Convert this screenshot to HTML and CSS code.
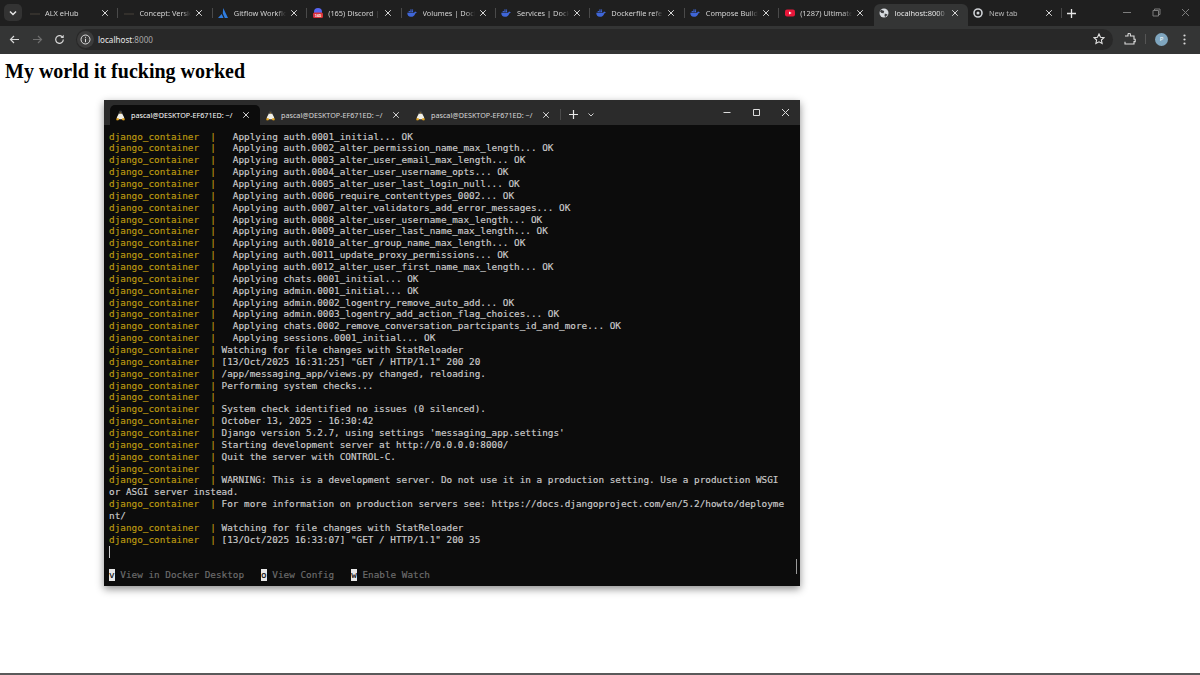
FILE: index.html
```html
<!DOCTYPE html>
<html lang="en">
<head>
<meta charset="utf-8">
<title>localhost:8000</title>
<link rel="stylesheet" href="styles.css">
</head>
<body>
<svg class="defs" width="0" height="0" aria-hidden="true">
  <symbol id="whale" viewBox="0 0 12 10"><path fill="#3f66d8" d="M0.300 4.600h8.400c.3-.9 1-1.200 1.400-1.300.2.500.5.700 1.600.8-.3.900-1 1.300-1.800 1.400C9.200 8.200 7.300 9.600 4.600 9.600 1.800 9.600.4 7.600.3 4.600z"/><path fill="#3f66d8" d="M2 2.600h1.500V4H2zM3.900 2.600h1.500V4H3.900zM5.800 2.600h1.500V4H5.800zM3.900.8h1.500v1.400H3.900zM5.800.8h1.500v1.400H5.800z"/></symbol>
  <symbol id="penguin" viewBox="0 0 12 12"><path fill="#f2f0e6" d="M6 2.500c1.200 0 1.800 1 2.200 2.200.5 1.500 2 3 2 4.700L8 10H4L1.800 9.400c0-1.700 1.500-3.200 2-4.700C4.200 3.500 4.800 2.500 6 2.500z"/><path fill="#3a3a3a" d="M6 .5c1.200 0 1.800 1 1.800 2.200 0 .6.200 1 .4 1.500H3.800c.2-.5.4-.9.4-1.500C4.200 1.500 4.800.5 6 .5z"/><path fill="#e2a21c" d="M1 9.500 3.700 8.700 4.500 11 2 11.500zM11 9.500 8.300 8.700 7.500 11 10 11.500zM5.200 3h1.600L6 4z"/></symbol>
  <symbol id="x" viewBox="0 0 10 10"><path fill="none" stroke="currentColor" stroke-width="1.200" d="M1.500 1.500l7 7M8.500 1.500l-7 7"/></symbol>
</svg>

<header class="chrome">
  <div class="tabstrip">
    <div class="tabsearch"><svg width="8" height="6" viewBox="0 0 8 6"><path fill="none" stroke="#e8e8e8" stroke-width="1.500" d="M1 1.500l3 3 3-3"/></svg></div>
    <div class="tabs">
      <div class="tab sep"><svg class="fav" viewBox="0 0 10 10"><path fill="#33302c" d="M0 5h10v2H0z"/></svg><span class="tab-title">ALX eHub</span><svg class="tab-x"><use href="#x"/></svg></div>
      <div class="tab sep"><svg class="fav" viewBox="0 0 10 10"><path fill="#33302c" d="M0 5h10v2H0z"/></svg><span class="tab-title">Concept: Versio</span><svg class="tab-x"><use href="#x"/></svg></div>
      <div class="tab sep"><svg class="fav" viewBox="0 0 10 10"><path fill="#2f7de1" d="M5.200 0 10 10H6.800L4.800 5.500zM3.700 6 5.500 10H0z"/></svg><span class="tab-title">Gitflow Workflo</span><svg class="tab-x"><use href="#x"/></svg></div>
      <div class="tab sep"><svg class="fav" viewBox="0 0 10 10"><circle cx="5" cy="4" r="4" fill="#5865f2"/><rect x="0" y="4.500" width="10" height="5.500" rx="1.500" fill="#d8303a"/><text class="badge" x="5" y="9">165</text></svg><span class="tab-title">(165) Discord |</span><svg class="tab-x"><use href="#x"/></svg></div>
      <div class="tab sep"><svg class="fav"><use href="#whale"/></svg><span class="tab-title">Volumes | Dock</span><svg class="tab-x"><use href="#x"/></svg></div>
      <div class="tab sep"><svg class="fav"><use href="#whale"/></svg><span class="tab-title">Services | Dock</span><svg class="tab-x"><use href="#x"/></svg></div>
      <div class="tab sep"><svg class="fav"><use href="#whale"/></svg><span class="tab-title">Dockerfile refe</span><svg class="tab-x"><use href="#x"/></svg></div>
      <div class="tab sep"><svg class="fav"><use href="#whale"/></svg><span class="tab-title">Compose Build</span><svg class="tab-x"><use href="#x"/></svg></div>
      <div class="tab"><svg class="fav" viewBox="0 0 10 10"><rect y="1.500" width="10" height="7" rx="2" fill="#e8173a"/><path fill="#fff" d="M4 3.500 6.700 5 4 6.500z"/></svg><span class="tab-title">(1287) Ultimate</span><svg class="tab-x"><use href="#x"/></svg></div>
      <div class="tab active"><svg class="fav" viewBox="0 0 10 10"><circle cx="5" cy="5" r="4.500" fill="#d6dade"/><path fill="#3c3d3f" d="M2 1.800 5.200 3 4.600 5.200 2.500 5 1 3.500zM5.800 5.600 8.600 6.400 6.500 9 5.500 8z"/></svg><span class="tab-title">localhost:8000</span><svg class="tab-x"><use href="#x"/></svg></div>
      <div class="tab sep"><svg class="fav" viewBox="0 0 10 10"><circle cx="5" cy="5" r="4" fill="none" stroke="#cfd2d6" stroke-width="1.600"/><circle cx="5" cy="5" r="1.500" fill="#cfd2d6"/></svg><span class="tab-title dim">New tab</span><svg class="tab-x"><use href="#x"/></svg></div>
    </div>
    <div class="newtab"><svg width="9" height="9" viewBox="0 0 9 9"><path stroke="#e6e6e6" stroke-width="1.300" d="M4.500 0v9M0 4.500h9"/></svg></div>
    <div class="winbtns">
      <svg width="9" height="9" viewBox="0 0 9 9"><path stroke="#7d7d7d" d="M0 4.500h8"/></svg>
      <svg width="9" height="9" viewBox="0 0 9 9"><path fill="none" stroke="#7d7d7d" d="M1 2.500h5.500V8H1zM2.500 2.500V1H8v5.500H6.500"/></svg>
      <svg width="9" height="9" viewBox="0 0 9 9"><path stroke="#7d7d7d" d="M1 1l7 7M8 1 1 8"/></svg>
    </div>
  </div>
  <div class="toolbar">
    <div class="navbtns">
      <svg width="11" height="11" viewBox="0 0 11 11"><path fill="none" stroke="#d8d8d8" stroke-width="1.200" d="M10 5.500H1.500M5 2 1.500 5.500 5 9"/></svg>
      <svg width="11" height="11" viewBox="0 0 11 11"><path fill="none" stroke="#6e6e6e" stroke-width="1.200" d="M1 5.500h8.500M6 2l3.500 3.500L6 9"/></svg>
      <svg width="11" height="11" viewBox="0 0 11 11"><path fill="none" stroke="#d8d8d8" stroke-width="1.200" d="M9.300 5.500A3.800 3.800 0 1 1 8.200 2.800"/><path fill="#d8d8d8" d="M9.700 .8v3.200H6.500z"/></svg>
    </div>
    <div class="omnibox">
      <span class="site-info"><svg width="11" height="11" viewBox="0 0 11 11"><circle cx="5.500" cy="5.500" r="4.500" fill="none" stroke="#dcdcdc" stroke-width="1"/><path stroke="#dcdcdc" d="M5.500 4.800v3.400M5.500 2.800v1"/></svg></span>
      <span class="url">localhost<span class="url-port">:8000</span></span>
      <svg class="star" width="12" height="12" viewBox="0 0 12 12"><path fill="none" stroke="#e4e4e4" stroke-width="1.100" d="M6 1l1.500 3.200 3.500.4-2.600 2.400.7 3.500L6 8.800 2.900 10.500l.7-3.500L1 4.600l3.500-.4z"/></svg>
    </div>
    <div class="tools">
      <svg width="12" height="12" viewBox="0 0 12 12"><path fill="none" stroke="#dcdcdc" stroke-width="1.100" d="M1 3h3V1.500a1.200 1.200 0 0 1 2.400 0V3H10v3.200h1.200V8.600H10V11H1V8.800"/></svg>
      <span class="tool-sep"></span>
      <span class="avatar">P</span>
      <svg class="dots" width="3" height="11" viewBox="0 0 3 11"><circle cx="1.500" cy="1.500" r="1.100" fill="#d8d8d8"/><circle cx="1.500" cy="5.500" r="1.100" fill="#d8d8d8"/><circle cx="1.500" cy="9.500" r="1.100" fill="#d8d8d8"/></svg>
    </div>
  </div>
</header>

<main class="page">
  <h1 class="headline">My world it fucking worked</h1>
  <section class="terminal">
    <div class="term-bar">
      <div class="term-tab active"><svg class="tux"><use href="#penguin"/></svg><span class="term-title">pascal@DESKTOP-EF671ED: ~/</span><svg class="term-x"><use href="#x"/></svg></div>
      <div class="term-tab"><svg class="tux"><use href="#penguin"/></svg><span class="term-title">pascal@DESKTOP-EF671ED: ~/</span><svg class="term-x"><use href="#x"/></svg></div>
      <div class="term-tab"><svg class="tux"><use href="#penguin"/></svg><span class="term-title">pascal@DESKTOP-EF671ED: ~/</span><svg class="term-x"><use href="#x"/></svg></div>
      <span class="term-divider"></span>
      <svg class="term-plus" width="9" height="9" viewBox="0 0 9 9"><path stroke="#e8e8e8" stroke-width="1.200" d="M4.500 0v9M0 4.500h9"/></svg>
      <svg class="term-chev" width="6" height="4" viewBox="0 0 6 4"><path fill="none" stroke="#cfcfcf" d="M.5.500 3 3 5.500.5"/></svg>
      <div class="term-win">
        <svg width="9" height="9" viewBox="0 0 9 9"><path stroke="#dcdcdc" d="M.5 4.500h7"/></svg>
        <svg width="9" height="9" viewBox="0 0 9 9"><path fill="none" stroke="#dcdcdc" d="M1.500 1.500h6v6h-6z"/></svg>
        <svg width="9" height="9" viewBox="0 0 9 9"><path stroke="#dcdcdc" d="M1 1l7 7M8 1 1 8"/></svg>
      </div>
    </div>
    <div class="term-body">
      <div class="log">
        <div class="line"><span class="c">django_container  |</span>   Applying auth.0001_initial... OK</div>
        <div class="line"><span class="c">django_container  |</span>   Applying auth.0002_alter_permission_name_max_length... OK</div>
        <div class="line"><span class="c">django_container  |</span>   Applying auth.0003_alter_user_email_max_length... OK</div>
        <div class="line"><span class="c">django_container  |</span>   Applying auth.0004_alter_user_username_opts... OK</div>
        <div class="line"><span class="c">django_container  |</span>   Applying auth.0005_alter_user_last_login_null... OK</div>
        <div class="line"><span class="c">django_container  |</span>   Applying auth.0006_require_contenttypes_0002... OK</div>
        <div class="line"><span class="c">django_container  |</span>   Applying auth.0007_alter_validators_add_error_messages... OK</div>
        <div class="line"><span class="c">django_container  |</span>   Applying auth.0008_alter_user_username_max_length... OK</div>
        <div class="line"><span class="c">django_container  |</span>   Applying auth.0009_alter_user_last_name_max_length... OK</div>
        <div class="line"><span class="c">django_container  |</span>   Applying auth.0010_alter_group_name_max_length... OK</div>
        <div class="line"><span class="c">django_container  |</span>   Applying auth.0011_update_proxy_permissions... OK</div>
        <div class="line"><span class="c">django_container  |</span>   Applying auth.0012_alter_user_first_name_max_length... OK</div>
        <div class="line"><span class="c">django_container  |</span>   Applying chats.0001_initial... OK</div>
        <div class="line"><span class="c">django_container  |</span>   Applying admin.0001_initial... OK</div>
        <div class="line"><span class="c">django_container  |</span>   Applying admin.0002_logentry_remove_auto_add... OK</div>
        <div class="line"><span class="c">django_container  |</span>   Applying admin.0003_logentry_add_action_flag_choices... OK</div>
        <div class="line"><span class="c">django_container  |</span>   Applying chats.0002_remove_conversation_partcipants_id_and_more... OK</div>
        <div class="line"><span class="c">django_container  |</span>   Applying sessions.0001_initial... OK</div>
        <div class="line"><span class="c">django_container  |</span> Watching for file changes with StatReloader</div>
        <div class="line"><span class="c">django_container  |</span> [13/Oct/2025 16:31:25] "GET / HTTP/1.1" 200 20</div>
        <div class="line"><span class="c">django_container  |</span> /app/messaging_app/views.py changed, reloading.</div>
        <div class="line"><span class="c">django_container  |</span> Performing system checks...</div>
        <div class="line"><span class="c">django_container  |</span></div>
        <div class="line"><span class="c">django_container  |</span> System check identified no issues (0 silenced).</div>
        <div class="line"><span class="c">django_container  |</span> October 13, 2025 - 16:30:42</div>
        <div class="line"><span class="c">django_container  |</span> Django version 5.2.7, using settings 'messaging_app.settings'</div>
        <div class="line"><span class="c">django_container  |</span> Starting development server at http://0.0.0.0:8000/</div>
        <div class="line"><span class="c">django_container  |</span> Quit the server with CONTROL-C.</div>
        <div class="line"><span class="c">django_container  |</span></div>
        <div class="line"><span class="c">django_container  |</span> WARNING: This is a development server. Do not use it in a production setting. Use a production WSGI</div>
        <div class="line">or ASGI server instead.</div>
        <div class="line"><span class="c">django_container  |</span> For more information on production servers see: https://docs.djangoproject.com/en/5.2/howto/deployme</div>
        <div class="line">nt/</div>
        <div class="line"><span class="c">django_container  |</span> Watching for file changes with StatReloader</div>
        <div class="line"><span class="c">django_container  |</span> [13/Oct/2025 16:33:07] "GET / HTTP/1.1" 200 35</div>
        <div class="line"><span class="cursor"></span></div>
      </div>
      <div class="hints">
        <span class="hint"><span class="key">v</span> View in Docker Desktop</span>
        <span class="hint"><span class="key">o</span> View Config</span>
        <span class="hint"><span class="key">w</span> Enable Watch</span>
      </div>
      <span class="scrollbar"></span>
    </div>
  </section>
</main>
<footer class="edge"></footer>
</body>
</html>
```
FILE: styles.css
```css
* { box-sizing: border-box; }
html, body { margin: 0; height: 100%; }
body { background: #fff; overflow: hidden; font-family: "Noto Sans", "Liberation Sans", sans-serif; display: flex; flex-direction: column; }
.defs { position: absolute; }

.chrome { background: #1f1f1f; height: 54px; color: #e2e2e2; flex: none; }
.tabstrip { height: 26px; display: flex; align-items: flex-start; }
.tabsearch { width: 18px; height: 17px; margin: 4px 0 0 4px; border-radius: 5px; background: #333; display: flex; align-items: center; justify-content: center; flex: none; }
.tabs { display: flex; margin-left: 2px; flex: none; }
.tab { width: 94.4px; height: 22px; margin-top: 4px; padding: 0 0 4px 5.5px; display: flex; align-items: center; position: relative; flex: none; font-size: 7.4px; color: #d4d4d4; }
.tab.sep::after { content: ""; position: absolute; right: 0; top: 4px; height: 10px; width: 1px; background: #4a4a4a; }
.tab.active { background: #343535; border-radius: 6px 6px 0 0; color: #e8e8e8; }
.fav { width: 10px; height: 10px; flex: none; }
.badge { font: bold 4px "Liberation Sans", sans-serif; fill: #fff; text-anchor: middle; }
.tab-title { width: 52px; margin-left: 5.5px; white-space: nowrap; flex: none; -webkit-mask-image: linear-gradient(90deg, #000 82%, transparent); mask-image: linear-gradient(90deg, #000 82%, transparent); }
.tab-title.dim { color: #b8b8b8; }
.tab-x { width: 8px; height: 8px; margin-left: 4px; flex: none; color: #dedede; }
.newtab { margin: 9px 0 0 5px; width: 9px; height: 9px; display: flex; flex: none; }
.winbtns { margin: 8px 0 0 auto; padding-right: 10px; display: flex; gap: 20px; }

.toolbar { height: 28px; background: #343535; display: flex; align-items: center; padding: 2px 0 4px 9px; }
.navbtns { display: flex; gap: 11.5px; align-items: center; flex: none; width: 67px; }
.omnibox { width: 1037px; height: 21px; border-radius: 11px; background: #282828; display: flex; align-items: center; flex: none; }
.site-info { width: 17px; height: 17px; margin-left: 1px; border-radius: 50%; background: #3c3c3c; display: flex; align-items: center; justify-content: center; flex: none; }
.url { margin-left: 4px; font-size: 8.1px; color: #e8e8e8; }
.url-port { color: #a8a8a8; }
.star { margin-left: auto; margin-right: 8px; }
.tools { display: flex; align-items: center; margin-left: 11px; gap: 9px; flex: none; }
.tool-sep { width: 1px; height: 10px; background: #555; }
.avatar { width: 13px; height: 13px; border-radius: 50%; background: #7fa6bf; color: #fff; font-size: 6px; line-height: 13px; text-align: center; }
.dots { margin-left: 6px; }

.page { padding: 7px 5px 0; flex: 1; min-height: 0; }
.headline { margin: 0; font: bold 20px/20px "Liberation Serif", serif; color: #000; }
.terminal { width: 696px; height: 486px; margin: 19px 0 0 99px; background: #0c0c0c; box-shadow: 0 3px 8px rgba(0,0,0,.45); }
.term-bar { height: 25px; background: #2b2b2b; display: flex; align-items: flex-end; padding-left: 6px; }
.term-tab { width: 150px; height: 20px; display: flex; align-items: center; padding-left: 5px; flex: none; color: #d8d8d8; }
.term-tab.active { background: #0c0c0c; border-radius: 5px 5px 0 0; color: #fff; }
.tux { width: 11px; height: 11px; flex: none; }
.term-title { margin-left: 5px; width: 105px; font-size: 7.2px; white-space: nowrap; flex: none; }
.term-x { width: 8px; height: 8px; margin-left: 6px; color: #d8d8d8; flex: none; }
.term-divider { width: 1px; height: 11px; background: #4a4a4a; margin: 0 0 5px 0; flex: none; }
.term-plus { margin: 0 0 6px 8px; }
.term-chev { margin: 0 0 8px 10px; }
.term-win { margin-left: auto; align-self: center; display: flex; gap: 20px; padding-right: 10px; }
.term-body { position: relative; height: 461px; padding: 5.5px 0 0 5px; }
.log { font: 9.35px/11.86px "DejaVu Sans Mono", "Liberation Mono", monospace; color: #cccccc; -webkit-text-stroke: 0.15px currentColor; }
.line { height: 11.86px; white-space: pre; }
.c { color: #bd9a10; }
.cursor { display: inline-block; width: 1px; height: 12px; background: #cccccc; vertical-align: top; }
.hints { display: flex; gap: 17px; margin-top: 12px; font: 9.35px/12px "DejaVu Sans Mono", "Liberation Mono", monospace; color: #6e6e6e; -webkit-text-stroke: 0.15px currentColor; }
.hint { white-space: pre; }
.key { background: #e8e8e8; color: #0c0c0c; display: inline-block; }
.scrollbar { position: absolute; right: 3px; top: 434px; width: 1px; height: 15px; background: #9a9a9a; }

.edge { height: 2px; background: #5a5a5a; flex: none; }
```
